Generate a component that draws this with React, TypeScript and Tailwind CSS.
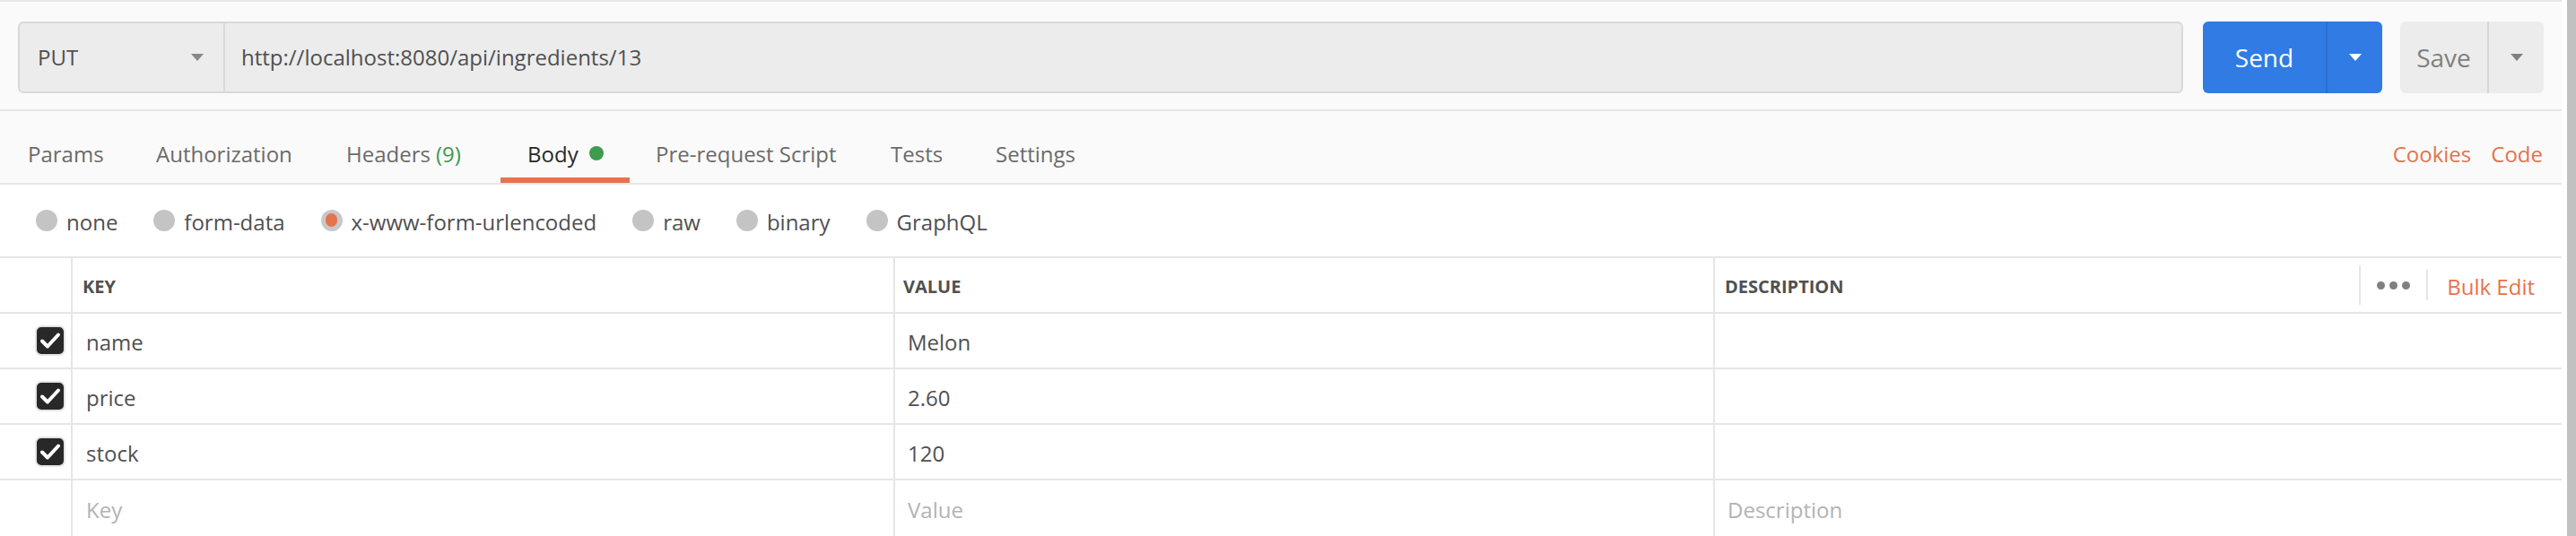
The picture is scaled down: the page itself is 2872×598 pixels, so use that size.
import React from "react"

const tabs = [
  { label: "Params", w: "w-[143px]" },
  { label: "Authorization", w: "w-[212px]" },
  { label: "Headers", w: "w-[202px]", count: "(9)" },
  { label: "Body", w: "w-[143px]", active: true },
  { label: "Pre-request Script", w: "w-[262px]" },
  { label: "Tests", w: "w-[117px]" },
  { label: "Settings", w: "w-[150px]" },
]

const bodyTypes = ["none", "form-data", "x-www-form-urlencoded", "raw", "binary", "GraphQL"]

const rows = [
  { key: "name", value: "Melon" },
  { key: "price", value: "2.60" },
  { key: "stock", value: "120" },
]

function Caret({ color }: { color: string }) {
  return (
    <svg width="14" height="8" viewBox="0 0 14 8">
      <path d="M0 0 L14 0 L7 8 Z" fill={color} />
    </svg>
  )
}

function Checkbox() {
  return (
    <div className="w-[34px] h-[34px] rounded-[7px] bg-[#282828] border-2 border-[#e4e4e4] flex items-center justify-center">
      <svg width="30" height="30" viewBox="0 0 30 30">
        <path d="M6 15.5 L12 21.5 L24 8.5" fill="none" stroke="white" strokeWidth="4" strokeLinecap="round" strokeLinejoin="round" />
      </svg>
    </div>
  )
}

export default function App() {
  return (
    <div className="flex w-[2872px] h-[598px] overflow-hidden bg-white font-['Open_Sans',sans-serif] text-[24px] text-[#505050]">
      <div className="flex-1 flex flex-col">
        {/* request bar */}
        <div className="h-[125px] bg-[#fafafa] border-t-2 border-b-2 border-[#e6e6e6] flex items-start pt-[22px] px-[20px]">
          <div className="flex-1 h-[80px] flex rounded-[6px] border-2 border-[#d9d9d9] bg-[#ececec]">
            <div className="w-[229px] flex items-center justify-between pl-[20px] pr-[22px] border-r-2 border-[#d9d9d9]">
              <span>PUT</span>
              <Caret color="#888888" />
            </div>
            <div className="flex items-center pl-[18px]">http://localhost:8080/api/ingredients/13</div>
          </div>
          <div className="ml-[22px] w-[200px] h-[80px] flex rounded-[6px] bg-[#317be4] text-white text-[28px]">
            <div className="w-[139px] flex items-center justify-center border-r-2 border-[#2a6fd3]">Send</div>
            <div className="flex-1 flex items-center justify-center">
              <Caret color="#ffffff" />
            </div>
          </div>
          <div className="ml-[20px] w-[160px] h-[80px] flex rounded-[6px] bg-[#ececec] text-[#808080] text-[28px]">
            <div className="w-[99px] flex items-center justify-center border-r-2 border-[#d6d6d6]">Save</div>
            <div className="flex-1 flex items-center justify-center">
              <Caret color="#808080" />
            </div>
          </div>
        </div>

        {/* tabs */}
        <div className="h-[82px] bg-[#fafafa] border-b-2 border-[#e6e6e6] flex items-center pt-[14px] pl-[31px] pr-[21px]">
          {tabs.map((t) => (
            <div key={t.label} className={`${t.w} relative flex items-center h-full ${t.active ? "text-[#282828]" : "text-[#6b6b6b]"}`}>
              <span className="pt-[3px]">{t.label}</span>
              {t.count && <span className="ml-[6px] pt-[3px] text-[#3c9a4e]">{t.count}</span>}
              {t.active && <span className="ml-[12px] w-[16px] h-[16px] rounded-full bg-[#3f9b4f]" />}
              {t.active && <div className="absolute left-[-30px] w-[144px] bottom-[0px] h-[6px] bg-[#e5734c]" />}
            </div>
          ))}
          <div className="flex-1" />
          <span className="pt-[3px] text-[#e5734c]">Cookies</span>
          <span className="ml-[22px] pt-[3px] text-[#e5734c]">Code</span>
        </div>

        {/* body types */}
        <div className="h-[81px] flex items-center pl-[40px]">
          {bodyTypes.map((b, i) => (
            <div key={b} className={`flex items-center ${i > 0 ? "ml-[40px]" : ""}`}>
              {b === "x-www-form-urlencoded" ? (
                <span className="w-[24px] h-[24px] rounded-full bg-[#c8c8c8] flex items-center justify-center">
                  <span className="w-[13px] h-[15px] rounded-full bg-[#e5734c]" />
                </span>
              ) : (
                <span className="w-[24px] h-[24px] rounded-full bg-[#c4c4c4]" />
              )}
              <span className="ml-[10px] pt-[4px]">{b}</span>
            </div>
          ))}
        </div>

        {/* table */}
        <div className="border-t-2 border-[#e6e6e6]">
          <div className="h-[62px] flex border-b-2 border-[#e6e6e6] text-[20px] font-bold">
            <div className="w-[81px] border-r-2 border-[#e6e6e6]" />
            <div className="w-[917px] border-r-2 border-[#e6e6e6] flex items-center pl-[11px] pt-[4px]">KEY</div>
            <div className="w-[914px] border-r-2 border-[#e6e6e6] flex items-center pl-[9px] pt-[4px]">VALUE</div>
            <div className="flex-1 flex items-center pl-[11px]">
              <span className="flex-1 pt-[4px]">DESCRIPTION</span>
              <div className="w-[2px] h-[44px] bg-[#e6e6e6]" />
              <div className="w-[73px] flex items-center justify-center gap-[5px]">
                <span className="w-[9px] h-[9px] rounded-full bg-[#808080]" />
                <span className="w-[9px] h-[9px] rounded-full bg-[#808080]" />
                <span className="w-[9px] h-[9px] rounded-full bg-[#808080]" />
              </div>
              <div className="w-[2px] h-[34px] bg-[#e6e6e6]" />
              <span className="ml-[21px] mr-[30px] pt-[3px] text-[24px] font-normal text-[#e5734c]">Bulk Edit</span>
            </div>
          </div>
          {rows.map((r) => (
            <div key={r.key} className="h-[62px] flex border-b-2 border-[#e6e6e6]">
              <div className="w-[81px] border-r-2 border-[#e6e6e6] flex items-center pl-[39px]">
                <Checkbox />
              </div>
              <div className="w-[917px] border-r-2 border-[#e6e6e6] flex items-center pl-[15px] pt-[3px]">{r.key}</div>
              <div className="w-[914px] border-r-2 border-[#e6e6e6] flex items-center pl-[14px] pt-[3px]">{r.value}</div>
              <div className="flex-1" />
            </div>
          ))}
          <div className="h-[62px] flex text-[#b3b3b3]">
            <div className="w-[81px] border-r-2 border-[#e6e6e6]" />
            <div className="w-[917px] border-r-2 border-[#e6e6e6] flex items-center pl-[15px] pt-[3px]">Key</div>
            <div className="w-[914px] border-r-2 border-[#e6e6e6] flex items-center pl-[14px] pt-[3px]">Value</div>
            <div className="flex-1 flex items-center pl-[14px] pt-[3px]">Description</div>
          </div>
        </div>
      </div>
      <div className="w-[6px] bg-white" />
      <div className="w-[10px] bg-[#c1c1c1]" />
    </div>
  )
}
